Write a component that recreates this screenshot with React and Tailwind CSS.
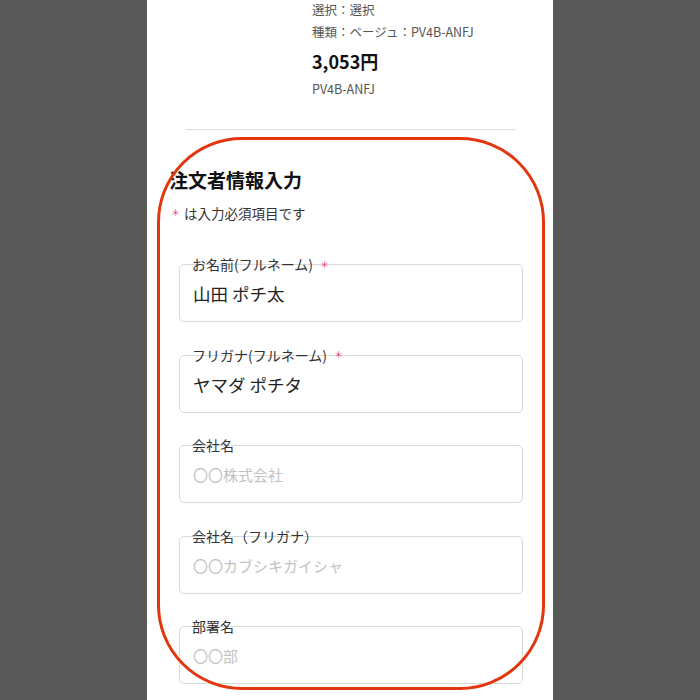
const fields = [
  { label: 'お名前(フルネーム)', required: true, value: '山田 ポチ太' },
  { label: 'フリガナ(フルネーム)', required: true, value: 'ヤマダ ポチタ' },
  { label: '会社名', placeholder: '〇〇株式会社' },
  { label: '会社名（フリガナ）', placeholder: '〇〇カブシキガイシャ' },
  { label: '部署名', placeholder: '〇〇部' },
]

export default function App() {
  return (
    <div className="flex h-[700px] w-full justify-center overflow-hidden bg-[#595959] font-['Noto_Sans_CJK_JP',sans-serif]">
      <div className="relative w-[406px] bg-white">

        {/* 商品情報 */}
        <div className="pl-[165px] text-[#555]">
          <p className="text-[12.5px] leading-[20px]">選択：選択</p>
          <p className="mt-px text-[12.5px] leading-[21px]">種類：ベージュ：PV4B-ANFJ</p>
          <p className="mt-[7px] text-[18px] font-bold leading-[24px] text-[#111]">3,053円</p>
          <p className="mt-[6px] text-[12.5px] leading-[20px]">PV4B-ANFJ</p>
        </div>

        <div className="ml-[39px] mr-[37px] mt-[30px] h-px bg-[#dcdcdc]" />

        {/* 注文者情報 */}
        <h2 className="mt-[36px] pl-[22px] text-[19px] font-bold leading-[28px] text-[#111]">注文者情報入力</h2>
        <p className="mt-[9px] flex items-center pl-[24px] text-[13.5px] leading-[20px] text-[#333]">
          <span className="mr-[4px] text-[9px] text-[#e8337a]">＊</span>は入力必須項目です
        </p>

        <div className="ml-[32px] mr-[30px] mt-[41px] flex flex-col gap-[32.5px]">
          {fields.map(f => (
            <div key={f.label} className="relative flex h-[58px] items-center rounded-[5px] border border-[#d9d9d9] pl-[13px] pt-[3px]">
              <span className="absolute left-[12px] top-[-1px] flex -translate-y-1/2 items-center text-[14px] leading-none text-[#333]">
                {f.label}
                {f.required && <span className="ml-[7px] text-[9px] text-[#e8337a]">＊</span>}
              </span>
              {f.value
                ? <span className="text-[17.5px] text-[#222]">{f.value}</span>
                : <span className="text-[15px] text-[#c2c2c2]">{f.placeholder}</span>}
            </div>
          ))}
        </div>

        {/* 強調枠 */}
        <div className="pointer-events-none absolute left-[10px] top-[137px] h-[553px] w-[388px] rounded-[85px] border-[3.5px] border-[#e2360f]" />
      </div>
    </div>
  )
}
